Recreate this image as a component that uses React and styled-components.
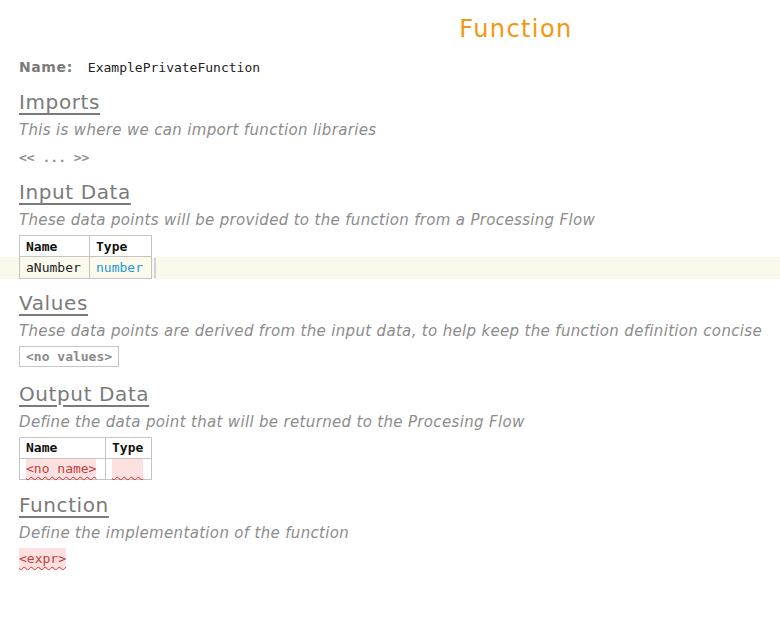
import React from 'react';
import styled, { createGlobalStyle } from 'styled-components';

const GlobalStyle = createGlobalStyle`
    html, body {
        margin: 0;
        padding: 0;
        background: #ffffff;
    }
    body {
        font-family: "DejaVu Sans", "Open Sans", sans-serif;
    }
`;

const MONO = `"DejaVu Sans Mono", "Liberation Mono", monospace`;

const Page = styled.div`
    width: 780px;
    min-height: 621px;
    padding-top: 13px;
    box-sizing: border-box;
`;

const Title = styled.h1`
    margin: 0;
    padding-left: 252px;
    text-align: center;
    font-size: 24px;
    font-weight: normal;
    letter-spacing: 1.4px;
    color: #f5960f;
    line-height: 32px;
`;

const Indent = styled.div`
    padding-left: 19px;
`;

const NameRow = styled(Indent)`
    display: flex;
    align-items: baseline;
    gap: 15px;
    margin-top: 12px;
    line-height: 20px;
`;

const NameLabel = styled.span`
    font-size: 14px;
    font-weight: bold;
    letter-spacing: 0.6px;
    color: #7b7b7b;
`;

const Mono = styled.span`
    font-family: ${MONO};
    font-size: 13px;
`;

const NameValue = styled(Mono)`
    color: #222;
`;

const Section = styled.section`
    margin-top: ${p => p.$top ?? 12}px;
`;

const Heading = styled.h2`
    margin: 0;
    font-size: 20px;
    font-weight: normal;
    letter-spacing: 0.6px;
    line-height: 26px;
    color: #7a7a7a;
    text-decoration: underline;
    text-decoration-thickness: 2px;
    text-underline-offset: 4px;
`;

const Desc = styled.p`
    margin: 3px 0 0 0;
    font-size: 15px;
    font-style: italic;
    letter-spacing: 0.33px;
    line-height: 24px;
    color: #8c8c8c;
`;

const Placeholder = styled(Mono)`
    display: block;
    margin-top: 5px;
    font-weight: bold;
    color: #8f8f8f;
    line-height: 21px;
`;

const Table = styled.table`
    border-collapse: collapse;
    table-layout: fixed;
    margin-top: ${p => p.$top ?? 3}px;
    font-family: ${MONO};
    font-size: 13px;
`;

const Cell = styled.td`
    box-sizing: border-box;
    border: 1px solid #c4c4c4;
    padding: 0 6px;
    height: 21px;
    text-align: left;
    white-space: nowrap;
`;

const Th = styled(Cell).attrs({ as: 'th' })`
    font-weight: bold;
    color: #111;
`;

const Td = styled(Cell)`
    color: ${p => p.$type ? '#1e9ad6' : '#222'};
`;

const HighlightRow = styled.div`
    background: #fbf8ec;
`;

const RowWrap = styled.div`
    display: flex;
    align-items: stretch;
`;

const Caret = styled.span`
    width: 2px;
    margin: 1px 0 1px 2px;
    background: #cdd0dc;
`;

const ErrorText = styled(Mono)`
    display: inline-block;
    height: 20px;
    line-height: 20px;
    background: #fde1e1;
    color: #c43c3c;
    text-decoration: underline wavy #d03030;
    text-decoration-thickness: 1px;
    text-underline-offset: 3px;
`;

const ValuesBox = styled(Mono)`
    display: block;
    width: fit-content;
    margin-top: 3px;
    padding: 0 6px;
    border: 1px solid #c4c4c4;
    font-weight: bold;
    color: #8a8a8a;
    line-height: 19px;
`;

const Expr = styled(ErrorText)`
    display: block;
    width: fit-content;
    margin-top: 3px;
    height: 21px;
    line-height: 21px;
`;

const Cols = ({ widths }) => (
    <colgroup>
        {widths.map((w, i) => <col key={i} style={{ width: w }} />)}
    </colgroup>
);

const App = () => {
    return (
        <>
            <GlobalStyle />
            <Page>
                <Title>Function</Title>
                <NameRow>
                    <NameLabel>Name:</NameLabel>
                    <NameValue>ExamplePrivateFunction</NameValue>
                </NameRow>

                <Section $top={11}>
                    <Indent>
                        <Heading>Imports</Heading>
                        <Desc>This is where we can import function libraries</Desc>
                        <Placeholder>&lt;&lt; ... &gt;&gt;</Placeholder>
                    </Indent>
                </Section>

                <Section $top={11}>
                    <Indent>
                        <Heading>Input Data</Heading>
                        <Desc>These data points will be provided to the function from a Processing Flow</Desc>
                        <Table>
                            <Cols widths={[70, 62]} />
                            <thead>
                                <tr><Th>Name</Th><Th>Type</Th></tr>
                            </thead>
                        </Table>
                    </Indent>
                    <HighlightRow>
                        <Indent>
                            <RowWrap>
                                <Table $top={0}>
                                    <Cols widths={[70, 62]} />
                                    <tbody>
                                        <tr>
                                            <Td style={{ borderTop: 'none' }}>aNumber</Td>
                                            <Td $type style={{ borderTop: 'none' }}>number</Td>
                                        </tr>
                                    </tbody>
                                </Table>
                                <Caret />
                            </RowWrap>
                        </Indent>
                    </HighlightRow>
                </Section>

                <Section $top={11}>
                    <Indent>
                        <Heading>Values</Heading>
                        <Desc>These data points are derived from the input data, to help keep the function definition concise</Desc>
                        <ValuesBox>&lt;no values&gt;</ValuesBox>
                    </Indent>
                </Section>

                <Section $top={14}>
                    <Indent>
                        <Heading>Output Data</Heading>
                        <Desc>Define the data point that will be returned to the Procesing Flow</Desc>
                        <Table>
                            <Cols widths={[86, 46]} />
                            <thead>
                                <tr><Th>Name</Th><Th>Type</Th></tr>
                            </thead>
                            <tbody>
                                <tr>
                                    <Cell><ErrorText>&lt;no name&gt;</ErrorText></Cell>
                                    <Cell><ErrorText>{'\u00a0\u00a0\u00a0\u00a0'}</ErrorText></Cell>
                                </tr>
                            </tbody>
                        </Table>
                    </Indent>
                </Section>

                <Section $top={12}>
                    <Indent>
                        <Heading>Function</Heading>
                        <Desc>Define the implementation of the function</Desc>
                        <Expr>&lt;expr&gt;</Expr>
                    </Indent>
                </Section>
            </Page>
        </>
    );
};

export default App;
